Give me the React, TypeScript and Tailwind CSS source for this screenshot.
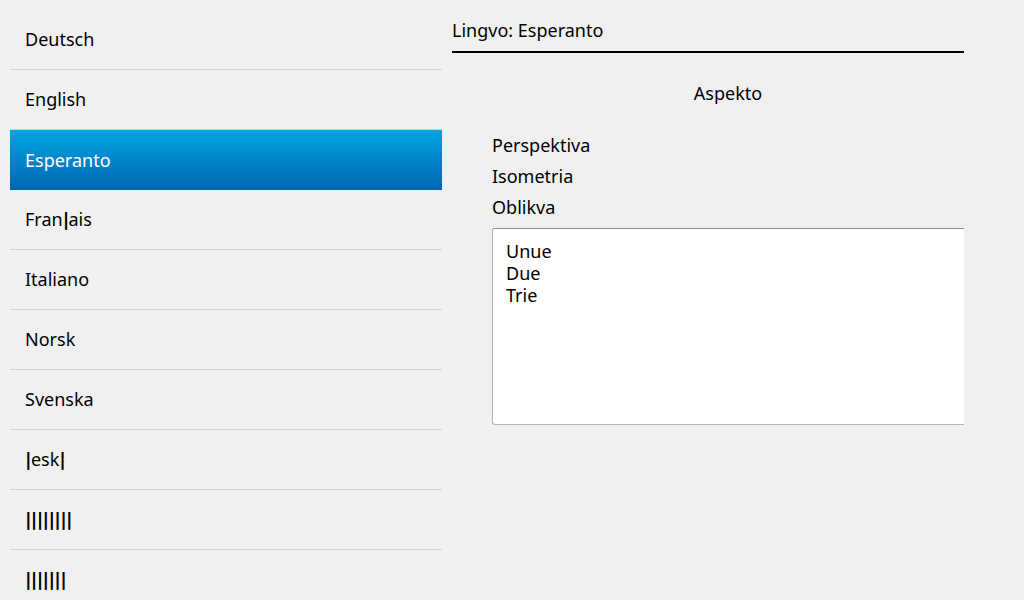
import React from 'react';

const languages = ['Deutsch', 'English', 'Esperanto', 'Fran|ais', 'Italiano', 'Norsk', 'Svenska', '|esk|', '||||||||', '|||||||'];

// pipes stand in for glyphs the device font lacked; draw them narrow like the original
const renderLabel = (label: string) =>
  label.split(/(\|+)/).map((part, i) =>
    part.startsWith('|') ? (
      <span key={i} className="font-bold tracking-[-0.7px]" style={{ fontFamily: '"DejaVu Sans", sans-serif' }}>
        {part}
      </span>
    ) : (
      <span key={i}>{part}</span>
    )
  );

const App: React.FC = () => {
  const selected = 'Esperanto';

  return (
    <div className="w-[1024px] h-[600px] overflow-hidden bg-[#f0f0f0] flex text-black" style={{ fontFamily: '"Noto Sans", sans-serif' }}>
      {/* Language list */}
      <div className="w-[432px] ml-[10px] pt-[10px] flex flex-col shrink-0">
        {languages.map((lang, i) => (
          <div
            key={i}
            className={`h-[60px] shrink-0 flex items-center pl-[15px] text-[18px] ${
              lang === selected
                ? 'bg-gradient-to-b from-[#00a6e0] to-[#0066b4] text-white'
                : 'border-b border-[#d2d2d2]'
            }`}
          >
            {renderLabel(lang)}
          </div>
        ))}
      </div>

      {/* Settings */}
      <div className="ml-[10px] w-[512px] flex flex-col">
        <div className="h-[53px] border-b-2 border-black flex items-end pb-[7px] text-[18px]">Lingvo: Esperanto</div>
        <div className="pl-[40px] flex flex-col">
          <div className="text-center text-[18px] mt-[27px] h-[26px] leading-[26px]">Aspekto</div>
          <div className="mt-[26px] flex flex-col gap-[5px] text-[18px] leading-[26px]">
            <span>Perspektiva</span>
            <span>Isometria</span>
            <span>Oblikva</span>
          </div>
          <div className="mt-[8px] h-[197px] bg-white border border-r-0 border-[#b4b4b4] border-t-[#8c8c8c] rounded-l-[3px] pl-[13px] pt-[11px] text-[18px] leading-[22px] flex flex-col">
            <span>Unue</span>
            <span>Due</span>
            <span>Trie</span>
          </div>
        </div>
      </div>
    </div>
  );
};

export default App;
